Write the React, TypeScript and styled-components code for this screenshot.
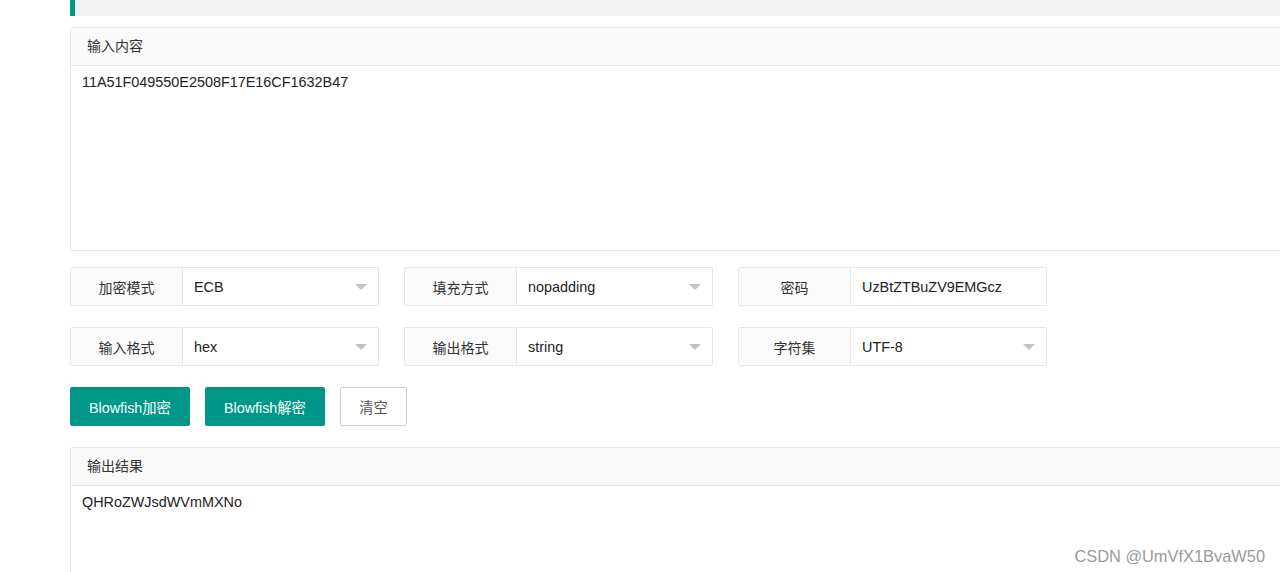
import React from "react";
import styled, { createGlobalStyle } from "styled-components";

const Global = createGlobalStyle`
  html, body { margin: 0; padding: 0; background: #fff; overflow: hidden; }
  body { font-family: "Liberation Sans", "Noto Sans CJK SC", sans-serif; font-size: 14px; color: #333; }
  * { box-sizing: border-box; }
`;

const Page = styled.div`
  width: 1280px;
  height: 572px;
  overflow: hidden;
  position: relative;
  padding-left: 70px;
`;

const Content = styled.div`
  width: 1240px;
  display: flex;
  flex-direction: column;
`;

const Quote = styled.div`
  height: 16px;
  background: #f2f2f2;
  border-left: 5px solid #009688;
  margin-bottom: 11px;
`;

const Panel = styled.div<{ $bodyHeight: number }>`
  border: 1px solid #e6e6e6;
  border-radius: 2px;
  display: flex;
  flex-direction: column;
  & > div:last-child { height: ${(p) => p.$bodyHeight}px; }
`;

const PanelHead = styled.div`
  height: 38px;
  line-height: 37px;
  background: #fafafa;
  border-bottom: 1px solid #e6e6e6;
  padding-left: 16px;
  color: #333;
`;

const PanelBody = styled.div`
  padding: 6px 11px;
  line-height: 20px;
  font-size: 14.4px;
  color: #222;
`;

const FormRow = styled.div<{ $top: number }>`
  display: flex;
  gap: 25px;
  margin-top: ${(p) => p.$top}px;
`;

const Field = styled.div`
  display: flex;
  height: 39px;
`;

const Label = styled.div`
  width: 113px;
  background: #fbfbfb;
  border: 1px solid #e6e6e6;
  border-radius: 2px 0 0 2px;
  display: flex;
  align-items: center;
  justify-content: center;
  color: #333;
`;

const Input = styled.div<{ $select?: boolean }>`
  position: relative;
  width: 196px;
  border: 1px solid #e6e6e6;
  border-left: none;
  border-radius: 0 2px 2px 0;
  display: flex;
  align-items: center;
  padding-left: 11px;
  font-size: 14.4px;
  color: #222;
  ${(p) =>
    p.$select &&
    `&::after {
      content: "";
      position: absolute;
      right: 11px;
      top: 16px;
      border-left: 6px solid transparent;
      border-right: 6px solid transparent;
      border-top: 6px solid #c2c2c2;
    }`}
`;

const Buttons = styled.div`
  display: flex;
  gap: 15px;
  margin-top: 21px;
  margin-bottom: 21px;
`;

const Button = styled.button<{ $primary?: boolean }>`
  height: 39px;
  padding: 0;
  font-family: inherit;
  font-size: 14.3px;
  border-radius: 2px;
  cursor: pointer;
  border: 1px solid ${(p) => (p.$primary ? "#009688" : "#d2d2d2")};
  background: ${(p) => (p.$primary ? "#009688" : "#fff")};
  color: ${(p) => (p.$primary ? "#fff" : "#555")};
  width: ${(p) => (p.$primary ? "120px" : "67px")};
`;

const Watermark = styled.div`
  position: absolute;
  right: 15px;
  bottom: 6px;
  font-family: "Liberation Sans", sans-serif;
  font-size: 16.4px;
  color: #9a9a9a;
  text-shadow: 0 0 2px #fff, 0 0 1px #fff;
`;

type F = { label: string; value: string; select?: boolean };

const row1: F[] = [
  { label: "加密模式", value: "ECB", select: true },
  { label: "填充方式", value: "nopadding", select: true },
  { label: "密码", value: "UzBtZTBuZV9EMGcz" },
];
const row2: F[] = [
  { label: "输入格式", value: "hex", select: true },
  { label: "输出格式", value: "string", select: true },
  { label: "字符集", value: "UTF-8", select: true },
];

const Row = ({ items, top }: { items: F[]; top: number }) => (
  <FormRow $top={top}>
    {items.map((f) => (
      <Field key={f.label}>
        <Label>{f.label}</Label>
        <Input $select={f.select}>{f.value}</Input>
      </Field>
    ))}
  </FormRow>
);

export default function App() {
  return (
    <Page>
      <Global />
      <Content>
        <Quote />
        <Panel $bodyHeight={184}>
          <PanelHead>输入内容</PanelHead>
          <PanelBody>11A51F049550E2508F17E16CF1632B47</PanelBody>
        </Panel>
        <Row items={row1} top={16} />
        <Row items={row2} top={21} />
        <Buttons>
          <Button $primary>Blowfish加密</Button>
          <Button $primary>Blowfish解密</Button>
          <Button>清空</Button>
        </Buttons>
        <Panel $bodyHeight={184}>
          <PanelHead>输出结果</PanelHead>
          <PanelBody>QHRoZWJsdWVmMXNo</PanelBody>
        </Panel>
      </Content>
      <Watermark>CSDN @UmVfX1BvaW50</Watermark>
    </Page>
  );
}
